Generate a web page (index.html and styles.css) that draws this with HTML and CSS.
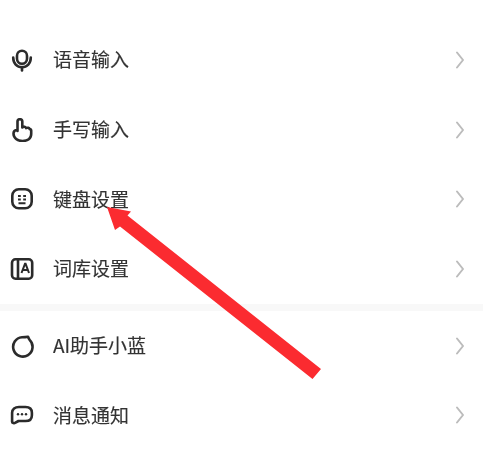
FILE: index.html
```html
<!DOCTYPE html>
<html lang="zh">
<head>
<meta charset="utf-8">
<title>设置</title>
<link rel="stylesheet" href="styles.css">
</head>
<body>
<main class="page">
  <section class="group">
    <div class="row">
      <svg class="icon" viewBox="0 0 24 24"><rect x="7" y="2.800" width="10" height="13" rx="5" class="ln"/><path d="M3.200 9.500c0 6 3.800 9.800 8.800 9.800s8.800-3.800 8.800-9.800" class="ln"/><path d="M12 19v3.500" class="ln"/></svg>
      <span class="label">语音输入</span>
      <svg class="chev" viewBox="0 0 10 18"><path d="M2 1.500 8 9l-6 7.500"/></svg>
    </div>
    <div class="row">
      <svg class="icon" viewBox="0 0 24 24"><path d="M7.500 13V3.600a2.400 2.400 0 0 1 4.800 0V9.500c1.500-1.200 3.300-.8 3.800.6 1.500-.8 3.200-.3 3.600 1 .9-.1 1.500.5 1.500 1.500V16c0 4.500-3.600 7-8.700 7-5 0-9-3-9-7.500 0-2.200 1.500-3.400 4-3.700" class="ln"/></svg>
      <span class="label">手写输入</span>
      <svg class="chev" viewBox="0 0 10 18"><path d="M2 1.500 8 9l-6 7.500"/></svg>
    </div>
    <div class="row">
      <svg class="icon" viewBox="0 0 24 24"><rect x="2.300" y="2.300" width="19.400" height="19" rx="6.500" class="ln"/><path d="M8 9h2.800M13.200 9H16M8 12.500h2.800M13.200 12.500H16M8.500 16.300h7" class="dash"/></svg>
      <span class="label">键盘设置</span>
      <svg class="chev" viewBox="0 0 10 18"><path d="M2 1.500 8 9l-6 7.500"/></svg>
    </div>
    <div class="row">
      <svg class="icon" viewBox="0 0 24 24"><rect x="2" y="2.300" width="20.200" height="19.400" rx="3.500" class="ln"/><path d="M8 2.300v19.400" class="ln"/><path d="M11.500 16 15 6.800h.6L19 16M12.800 13h5" class="dash"/></svg>
      <span class="label">词库设置</span>
      <svg class="chev" viewBox="0 0 10 18"><path d="M2 1.500 8 9l-6 7.500"/></svg>
    </div>
  </section>
  <div class="divider"></div>
  <section class="group">
    <div class="row">
      <svg class="icon" viewBox="0 0 24 24"><path d="M12 3.200c2.200 0 4-.1 6-.5.300 1.100.800 2 1.600 3.200A9.700 9.700 0 1 1 12 3.200z" class="ln"/></svg>
      <span class="label">AI助手小蓝</span>
      <svg class="chev" viewBox="0 0 10 18"><path d="M2 1.500 8 9l-6 7.500"/></svg>
    </div>
    <div class="row">
      <svg class="icon" viewBox="0 0 24 24"><path d="M9 4h6.500c4 0 6.400 2.200 6.400 5.800v2.400c0 3.600-2.400 5.800-6.400 5.800H8.500l-3 1.700c-1.400.7-3.400.4-3.400-1V9.800C2.100 6.200 5 4 9 4z" class="ln"/><circle cx="8" cy="11.200" r="1.200" class="dot"/><circle cx="12" cy="11.200" r="1.200" class="dot"/><circle cx="16" cy="11.200" r="1.200" class="dot"/></svg>
      <span class="label">消息通知</span>
      <svg class="chev" viewBox="0 0 10 18"><path d="M2 1.500 8 9l-6 7.500"/></svg>
    </div>
  </section>
  <svg class="arrow" viewBox="0 0 483 454"><polygon points="107,207 131,211.500 127.500,215.500 321,369 312.500,379 120,226.500 115,230"/></svg>
</main>
</body>
</html>
```
FILE: styles.css
```css
html, body {
  margin: 0;
  padding: 0;
  background: #fff;
}
.page {
  position: relative;
  width: 483px;
  height: 454px;
  overflow: hidden;
  padding-top: 25px;
  box-sizing: border-box;
  filter: blur(0.4px);
  font-family: "Noto Sans CJK SC", "Liberation Sans", sans-serif;
}
.row {
  display: flex;
  align-items: center;
  height: 69.7px;
  padding: 0 18px 0 10px;
}
.icon {
  width: 24px;
  height: 24px;
  flex: none;
}
.ln {
  fill: none;
  stroke: #2b2b2b;
  stroke-width: 2.600;
  stroke-linecap: round;
  stroke-linejoin: round;
}
.dash {
  fill: none;
  stroke: #2b2b2b;
  stroke-width: 2;
}
.dot {
  fill: #2b2b2b;
}
.label {
  margin-left: 19px;
  padding-bottom: 1px;
  flex: 1;
  font-size: 19px;
  line-height: 24px;
  color: #333;
  -webkit-text-stroke: 0.15px #333;
}
.chev {
  width: 10px;
  height: 18px;
  flex: none;
}
.chev path {
  fill: none;
  stroke: #bcbcbc;
  stroke-width: 2;
  stroke-linecap: round;
  stroke-linejoin: round;
}
.divider {
  height: 7px;
  background: #f8f8f8;
}
.arrow {
  position: absolute;
  left: 0;
  top: 0;
  width: 483px;
  height: 454px;
}
.arrow polygon {
  fill: #fb2b30;
}
```
